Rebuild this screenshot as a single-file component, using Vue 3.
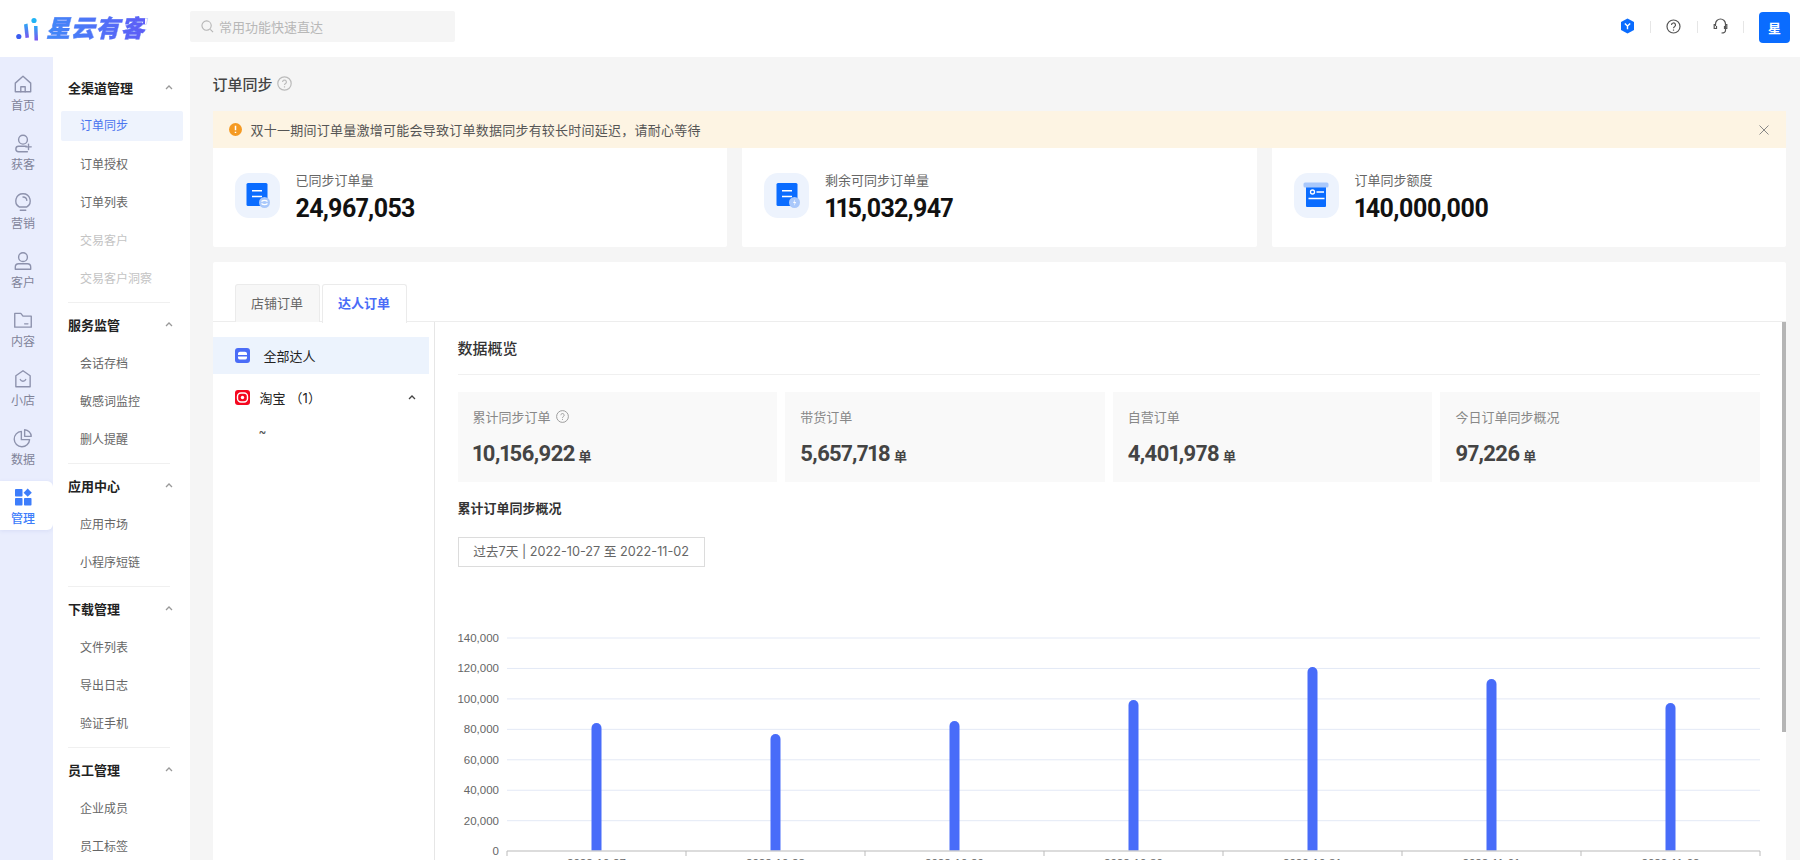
<script setup>
const rail = [
  { label: '首页', d: ['M3 9.2 10 3l7 6.2V17H3z', 'M8 17v-4.500h4V17'] },
  { label: '获客', d: ['M10 3a4 4 0 1 1 0 8 4 4 0 0 1 0-8z', 'M13 13H6a2.500 2.500 0 0 0 0 5h8', 'M15 11v5M12.500 13.500h5'] },
  { label: '营销', d: ['M10 2.500a6.500 6.500 0 0 1 3.500 12H6.500A6.500 6.500 0 0 1 10 2.500z', 'M7.500 17.500h5', 'M10 5.500a3.500 3.500 0 0 1 3.500 3'] },
  { label: '客户', d: ['M10 2.500a4 4 0 1 1 0 8 4 4 0 0 1 0-8z', 'M6 12.500h8a3 3 0 0 1 3 3v2H3v-2a3 3 0 0 1 3-3z'] },
  { label: '内容', d: ['M2.500 4h5.500l2 2.500h7.500V16.500h-15z', 'M11.500 13.500h3'] },
  { label: '小店', d: ['M10 2.500 16.500 7v10h-13V7z', 'M7.500 10.500c1 2 4 2 5 0'] },
  { label: '数据', d: ['M8.500 4a7 7 0 1 0 7.500 7.500H8.500z', 'M11.500 2.500a6.500 6.500 0 0 1 6 6h-6z'] }
]
const groups = [
  { title: '全渠道管理', items: [{ t: '订单同步', on: true }, { t: '订单授权' }, { t: '订单列表' }, { t: '交易客户', off: true }, { t: '交易客户洞察', off: true }] },
  { title: '服务监管', items: [{ t: '会话存档' }, { t: '敏感词监控' }, { t: '删人提醒' }] },
  { title: '应用中心', items: [{ t: '应用市场' }, { t: '小程序短链' }] },
  { title: '下载管理', items: [{ t: '文件列表' }, { t: '导出日志' }, { t: '验证手机' }] },
  { title: '员工管理', items: [{ t: '企业成员' }, { t: '员工标签' }] }
]
const stats = [
  { label: '已同步订单量', value: '24,967,053', kind: 'sync' },
  { label: '剩余可同步订单量', value: '115,032,947', kind: 'bolt' },
  { label: '订单同步额度', value: '140,000,000', kind: 'quota' }
]
const metrics = [
  { label: '累计同步订单', value: '10,156,922', help: true },
  { label: '带货订单', value: '5,657,718' },
  { label: '自营订单', value: '4,401,978' },
  { label: '今日订单同步概况', value: '97,226' }
]
const yLabels = ['140,000', '120,000', '100,000', '80,000', '60,000', '40,000', '20,000', '0']
const grid = yLabels.map((label, i) => ({ label, y: 18 + i * 30.45 }))
const plotLeft = 49
const step = 179
const axisY = 231
const bars = [
  { date: '2022-10-27', top: 103 },
  { date: '2022-10-28', top: 114 },
  { date: '2022-10-29', top: 101 },
  { date: '2022-10-30', top: 80 },
  { date: '2022-10-31', top: 47 },
  { date: '2022-11-01', top: 59 },
  { date: '2022-11-02', top: 83 }
].map((b, i) => {
  const cx = plotLeft + step * (i + 0.5)
  return { ...b, cx, path: `M${cx - 5} ${axisY}V${b.top + 5}a5 5 0 0 1 10 0V${axisY}z` }
})
const ticks = Array.from({ length: 8 }, (_, i) => plotLeft + step * i)
</script>

<template>
  <div class="app">
    <header class="top">
      <div class="logo">
        <svg class="mark" width="30" height="26" viewBox="0 0 30 26">
          <defs>
            <linearGradient id="lg" x1="0" y1="0" x2="0" y2="1">
              <stop offset="0" stop-color="#2ba8f5" />
              <stop offset="1" stop-color="#7a55f0" />
            </linearGradient>
          </defs>
          <circle cx="2.800" cy="20.500" r="2.600" fill="#3a5cf0" />
          <path d="M8 8.500l3.500-1 1.500 14-3.500.5z" fill="url(#lg)" />
          <path d="M18 10h3.500l.5 14.500h-3.500z" fill="url(#lg)" />
          <circle cx="18" cy="4.500" r="2.600" fill="#21b4f5" />
        </svg>
        <span class="logo-text">星云有客</span>
      </div>
      <div class="search">
        <svg width="13" height="13" viewBox="0 0 14 14" fill="none" stroke="#b5b5b5" stroke-width="1.200">
          <circle cx="6" cy="6" r="5" />
          <path d="M10 10l3 3" />
        </svg>
        <span>常用功能快速直达</span>
      </div>
      <div class="top-right">
        <svg class="tool" width="15" height="16" viewBox="0 0 15 16">
          <path d="M7.500.500 14 4v8l-6.500 3.500L1 12V4z" fill="#0a6cff" />
          <path d="M4.800 5.500 7.500 8l2.700-2.500M7.500 8v3.200" fill="none" stroke="#fff" stroke-width="1.400" />
        </svg>
        <i class="sep"></i>
        <svg class="tool" width="15" height="15" viewBox="0 0 15 15" fill="none" stroke="#555" stroke-width="1.200">
          <circle cx="7.500" cy="7.500" r="6.500" />
          <path d="M5.500 6a2 2 0 1 1 3 1.700c-.7.400-1 .8-1 1.500" />
          <path d="M7.500 10.500v1.200" />
        </svg>
        <i class="sep"></i>
        <svg class="tool" width="15" height="16" viewBox="0 0 15 16" fill="none" stroke="#555" stroke-width="1.200">
          <path d="M2.500 8V6a5 5 0 0 1 10 0v6.500c0 1.500-1.500 2.500-4 2.500" />
          <path d="M2.500 6.500H1.200v4h2.300V8M12.500 6.500h1.300v4h-2.300V8" />
        </svg>
        <i class="sep"></i>
        <div class="avatar">星</div>
      </div>
    </header>

    <div class="body">
      <nav class="rail">
        <div v-for="r in rail" :key="r.label" class="rail-item">
          <svg class="rail-icon" width="22" height="22" viewBox="0 0 20 20" fill="none" stroke="#8d92ad" stroke-width="1.250" stroke-linejoin="round" stroke-linecap="round">
            <path v-for="p in r.d" :key="p" :d="p" />
          </svg>
          <span>{{ r.label }}</span>
        </div>
        <div class="rail-item active">
          <svg width="20" height="20" viewBox="0 0 20 20" fill="#3d7dfb">
            <rect x="2" y="2" width="7.500" height="7.500" rx=".8" />
            <path d="M14.700 1.500 18.800 5.700l-4.100 4.100-4.100-4.100z" />
            <rect x="2" y="11" width="7.500" height="7.500" rx=".8" />
            <rect x="11" y="11" width="7.500" height="7.500" rx=".8" />
          </svg>
          <span>管理</span>
        </div>
      </nav>

      <aside class="sub">
        <section v-for="(g, i) in groups" :key="g.title" class="group" :class="{ divided: i > 0 }">
          <div class="group-title">
            <span>{{ g.title }}</span>
            <svg width="8" height="5" viewBox="0 0 8 5" fill="none" stroke="#999" stroke-width="1.300">
              <path d="M1 4l3-3 3 3" />
            </svg>
          </div>
          <div v-for="it in g.items" :key="it.t" class="sub-item" :class="{ on: it.on, off: it.off }">{{ it.t }}</div>
        </section>
      </aside>

      <main class="main">
        <div class="page-title">
          <span>订单同步</span>
          <svg width="15" height="15" viewBox="0 0 15 15" fill="none" stroke="#bbb" stroke-width="1.200">
            <circle cx="7.500" cy="7.500" r="6.700" />
            <path d="M5.600 6a1.900 1.900 0 1 1 2.900 1.600c-.6.400-1 .8-1 1.500M7.500 10.300v1.100" />
          </svg>
        </div>

        <div class="alert">
          <svg width="13" height="13" viewBox="0 0 13 13">
            <circle cx="6.500" cy="6.500" r="6.500" fill="#f59a23" />
            <path d="M6.500 2.800v4.400M6.500 8.700v1.400" stroke="#fff" stroke-width="1.500" />
          </svg>
          <span class="alert-text">双十一期间订单量激增可能会导致订单数据同步有较长时间延迟，请耐心等待</span>
          <svg class="close" width="10" height="10" viewBox="0 0 10 10" stroke="#888" stroke-width="1" fill="none">
            <path d="M.5.500l9 9M9.500.500l-9 9" />
          </svg>
        </div>

        <div class="stats">
          <div v-for="s in stats" :key="s.label" class="stat">
            <div class="tile">
              <svg width="26" height="26" viewBox="0 0 26 26">
                <template v-if="s.kind !== 'quota'">
                  <rect x="2.500" y="1" width="21" height="23" rx="1.500" fill="#0a6cff" />
                  <path d="M8 8.800h10M8 14.500h10" stroke="#fff" stroke-width="1.600" />
                  <circle cx="20.500" cy="20.500" r="5.500" fill="#a9c8fb" />
                  <path v-if="s.kind === 'sync'" d="M17.500 19.500c1.500-1.500 4.500-1.500 6 0M17.500 21.500c1.500 1.500 4.500 1.500 6 0" stroke="#fff" stroke-width="1.100" fill="none" />
                  <path v-else d="M21.200 17l-2.200 4h1.700l-.9 3 2.400-4h-1.700z" fill="#fff" />
                </template>
                <template v-else>
                  <rect x="3" y="3" width="20" height="22" rx="1" fill="#0a6cff" />
                  <rect x=".5" y=".5" width="25" height="5" rx="1.500" fill="#a9c8fb" />
                  <circle cx="9.500" cy="10" r="2" fill="none" stroke="#fff" stroke-width="1.300" />
                  <path d="M13.500 10H21M5.500 16.500h16" stroke="#fff" stroke-width="1.500" />
                </template>
              </svg>
            </div>
            <div class="stat-text">
              <div class="stat-label">{{ s.label }}</div>
              <div class="stat-value">{{ s.value }}</div>
            </div>
          </div>
        </div>

        <div class="panel">
          <div class="tabs">
            <div class="tab">店铺订单</div>
            <div class="tab active">达人订单</div>
          </div>
          <div class="panel-body">
            <div class="side">
              <div class="all-row">
                <svg width="15" height="15" viewBox="0 0 15 15">
                  <rect width="15" height="15" rx="3" fill="#4a6cf7" />
                  <path d="M3 5.500a2 2 0 0 1 2-1.800h5a2 2 0 0 1 2 1.800V7H3zM3 8.500h9v1.500a2 2 0 0 1-2 1.500H5a2 2 0 0 1-2-1.500z" fill="#fff" />
                </svg>
                <span>全部达人</span>
              </div>
              <div class="tb-row">
                <svg width="15" height="15" viewBox="0 0 15 15">
                  <rect width="15" height="15" rx="3" fill="#f5071f" />
                  <rect x="2.500" y="3" width="10" height="9" rx="3.500" fill="none" stroke="#fff" stroke-width="1.400" />
                  <circle cx="7.500" cy="7.500" r="1.700" fill="#fff" />
                </svg>
                <span class="tb-name">淘宝</span>
                <span class="tb-count">（1）</span>
                <svg class="tb-chev" width="8" height="5" viewBox="0 0 8 5" fill="none" stroke="#444" stroke-width="1.300">
                  <path d="M1 4l3-3 3 3" />
                </svg>
              </div>
              <div class="tilde">~</div>
            </div>

            <div class="content">
              <div class="scroll-thumb"></div>
              <div class="content-title">数据概览</div>
              <div class="metrics">
                <div v-for="m in metrics" :key="m.label" class="metric">
                  <div class="metric-label">
                    <span>{{ m.label }}</span>
                    <svg v-if="m.help" width="13" height="13" viewBox="0 0 15 15" fill="none" stroke="#999" stroke-width="1.100">
                      <circle cx="7.500" cy="7.500" r="6.800" />
                      <path d="M5.600 6a1.900 1.900 0 1 1 2.900 1.600c-.6.400-1 .8-1 1.500M7.500 10.300v1.100" />
                    </svg>
                  </div>
                  <div class="metric-value">{{ m.value }} <small>单</small></div>
                </div>
              </div>
              <div class="sec-title">累计订单同步概况</div>
              <div class="range">过去7天 | 2022-10-27 至 2022-11-02</div>
              <svg class="chart" width="1302" height="262" viewBox="0 0 1302 262">
                <g v-for="g in grid" :key="g.label">
                  <line v-if="g.label !== '0'" :x1="plotLeft" :x2="1302" :y1="g.y" :y2="g.y" stroke="#e3e9f6" />
                  <text x="41" :y="g.y + 4" text-anchor="end" class="axis-text">{{ g.label }}</text>
                </g>
                <path v-for="b in bars" :key="b.date" :d="b.path" fill="#486cf9" />
                <line :x1="plotLeft" :x2="1302" :y1="axisY" :y2="axisY" stroke="#d0d0d0" stroke-width="1.500" />
                <line v-for="t in ticks" :key="t" :x1="t" :x2="t" :y1="axisY" :y2="axisY + 5" stroke="#bbb" />
                <text v-for="b in bars" :key="'l' + b.date" :x="b.cx" y="247" text-anchor="middle" class="axis-text">{{ b.date }}</text>
              </svg>
            </div>
          </div>
        </div>
      </main>
    </div>
  </div>
</template>

<style>
html, body { margin: 0; padding: 0; background: #f5f5f5; overflow: hidden; }
</style>

<style scoped>
.app {
  width: 1800px;
  height: 860px;
  overflow: hidden;
  display: flex;
  flex-direction: column;
  font-family: Inter, "Noto Sans CJK SC", sans-serif;
  background: #f5f5f5;
}
.top {
  height: 57px;
  flex: none;
  background: #fff;
  display: flex;
  align-items: center;
  box-sizing: border-box;
}
.logo {
  width: 190px;
  flex: none;
  padding-left: 16px;
  box-sizing: border-box;
  display: flex;
  align-items: center;
}
.mark { flex: none; }
.logo-text {
  font-size: 24px;
  line-height: 30px;
  font-weight: 900;
  font-style: italic;
  letter-spacing: .8px;
  background: linear-gradient(90deg, #3f8af8, #5f5cf6);
  -webkit-background-clip: text;
  background-clip: text;
  color: transparent;
  -webkit-text-stroke: .25px #4f72f7;
}
.search {
  width: 265px;
  height: 31px;
  margin-top: -4px;
  background: #f5f5f5;
  border-radius: 2px;
  display: flex;
  align-items: center;
  gap: 5px;
  padding-left: 11px;
  box-sizing: border-box;
  font-size: 13px;
  color: #b8b8b8;
}
.top-right {
  margin-left: auto;
  padding-right: 10px;
  display: flex;
  align-items: center;
  margin-top: -3px;
}
.tool { margin-top: -2px; }
.sep {
  width: 1px;
  height: 12px;
  background: #e6e6e6;
  margin: 0 15px 0 15.500px;
}
.avatar {
  width: 31px;
  height: 31px;
  background: #0a6cff;
  border-radius: 4px;
  color: #fff;
  font-size: 13px;
  font-weight: 700;
  display: flex;
  align-items: center;
  justify-content: center;
}
.body { flex: 1; display: flex; min-height: 0; }
.rail {
  width: 53px;
  flex: none;
  background: #e9edfd;
  padding-top: 11px;
  box-sizing: border-box;
}
.rail-item {
  height: 49px;
  margin-bottom: 10px;
  padding: 6px 7px 0 0;
  box-sizing: border-box;
  display: flex;
  flex-direction: column;
  align-items: center;
  font-size: 12px;
  color: #7f8399;
}
.rail-icon { margin: -1px 0; }
.rail-item span { display: block; line-height: 17px; margin-top: 3px; }
.rail-item.active {
  background: #fff;
  color: #3d7dfb;
  border-radius: 0 6px 6px 0;
  box-shadow: 0 1px 4px rgba(90, 110, 200, .12);
  font-weight: 500;
}
.sub {
  width: 137px;
  flex: none;
  background: #fff;
  padding: 16px 7px 0 8px;
  box-sizing: border-box;
  overflow: hidden;
}
.group.divided::before {
  content: "";
  display: block;
  height: 1px;
  margin: 9px 13px 7px 7px;
  background: #f0f0f0;
}
.group-title {
  height: 28px;
  margin-bottom: 10px;
  padding: 0 10px 0 7px;
  display: flex;
  align-items: center;
  justify-content: space-between;
  font-size: 13px;
  font-weight: 600;
  color: #222;
}
.sub-item {
  height: 30px;
  line-height: 32px;
  margin-bottom: 8px;
  padding-left: 19px;
  font-size: 12px;
  color: #666;
  border-radius: 2px;
}
.sub-item.on { line-height: 30px; background: #eef3fd; color: #4a74ef; }
.sub-item.off { color: #c4c4c4; }
.main {
  flex: 1;
  min-width: 0;
  padding: 0 14px 0 22.600px;
  box-sizing: border-box;
}
.page-title {
  height: 54px;
  padding-bottom: 2px;
  box-sizing: border-box;
  display: flex;
  align-items: center;
  gap: 4px;
  font-size: 15px;
  font-weight: 500;
  color: #444;
}
.alert {
  height: 37px;
  background: #fdf4e3;
  display: flex;
  align-items: center;
  padding: 0 17px 0 16px;
  font-size: 13px;
  color: #555;
}
.alert-text { margin-left: 9px; letter-spacing: .24px; }
.close { margin-left: auto; }
.stats {
  display: grid;
  grid-template-columns: repeat(3, 1fr);
  gap: 15px;
}
.stat {
  height: 99px;
  background: #fff;
  border-radius: 0 0 2px 2px;
  padding-left: 22px;
  display: flex;
  align-items: center;
  box-sizing: border-box;
}
.tile {
  width: 45px;
  height: 45px;
  flex: none;
  margin-top: -5px;
  border-radius: 14px;
  background: #edf3fd;
  display: flex;
  align-items: center;
  justify-content: center;
}
.stat-text { margin-left: 16px; margin-top: -2px; }
.stat-label { font-size: 13px; line-height: 18px; color: #666; }
.stat-value {
  margin-top: 6px;
  font-family: Roboto, sans-serif;
  font-size: 25px;
  line-height: 28px;
  font-weight: 700;
  letter-spacing: -.8px;
  font-variant-numeric: proportional-nums;
  color: #111;
}
.panel {
  margin-top: 15px;
  background: #fff;
  height: 620px;
  border-radius: 2px 2px 0 0;
}
.tabs {
  height: 60px;
  padding: 22px 0 0 22px;
  box-sizing: border-box;
  display: flex;
  gap: 2px;
  border-bottom: 1px solid #ededed;
}
.tab {
  width: 85px;
  height: 38px;
  box-sizing: border-box;
  border: 1px solid #ebebeb;
  border-bottom: none;
  border-radius: 3px 3px 0 0;
  background: #f7f7f7;
  text-align: center;
  line-height: 37px;
  font-size: 13px;
  color: #666;
}
.tab.active {
  height: 39px;
  background: #fff;
  color: #4a6cf7;
  font-weight: 700;
}
.panel-body { display: flex; height: 560px; }
.side {
  width: 222px;
  flex: none;
  box-sizing: border-box;
  padding: 15px 5px 0 0;
  border-right: 1px solid #e6e6e6;
  font-size: 13px;
  color: #222;
}
.all-row {
  height: 37px;
  background: #ecf3fd;
  display: flex;
  align-items: center;
  padding-left: 22px;
  gap: 14px;
  box-sizing: border-box;
}
.tb-row {
  height: 46px;
  display: flex;
  align-items: center;
  padding: 0 13px 0 22px;
}
.tb-name { margin-left: 10px; }
.tb-count { margin-left: 4px; }
.tb-chev { margin-left: auto; }
.tilde { padding: 2px 0 0 46px; font-size: 12px; line-height: 20px; color: #555; }
.content {
  flex: 1;
  min-width: 0;
  position: relative;
  padding: 0 26px 0 23px;
  box-sizing: border-box;
}
.scroll-thumb {
  position: absolute;
  top: 0;
  right: 0;
  width: 4px;
  height: 410px;
  background: #b5b5b5;
}
.content-title {
  height: 53px;
  line-height: 53px;
  font-size: 15px;
  font-weight: 500;
  color: #333;
  border-bottom: 1px solid #f0f0f0;
  box-sizing: border-box;
}
.metrics {
  margin-top: 17px;
  display: grid;
  grid-template-columns: repeat(4, 1fr);
  gap: 8px;
}
.metric {
  height: 90px;
  background: #f9f9f9;
  padding: 14px 15px 0;
  box-sizing: border-box;
}
.metric-label {
  display: flex;
  align-items: center;
  gap: 5px;
  height: 20px;
  font-size: 13px;
  color: #888;
}
.metric-value {
  margin-top: 14px;
  font-family: Roboto, sans-serif;
  font-size: 22px;
  line-height: 28px;
  font-weight: 700;
  color: #444;
  letter-spacing: -.65px;
  font-variant-numeric: proportional-nums;
}
.metric-value small {
  margin-left: -1px;
  font-family: "Noto Sans CJK SC", sans-serif;
  font-size: 13px;
  font-weight: 700;
  letter-spacing: 0;
}
.sec-title {
  margin-top: 16px;
  height: 20px;
  line-height: 20px;
  font-size: 13px;
  font-weight: 600;
  color: #333;
}
.range {
  margin-top: 19px;
  width: 247px;
  height: 30px;
  line-height: 28px;
  box-sizing: border-box;
  border: 1px solid #dcdcdc;
  text-align: center;
  font-size: 12.700px;
  color: #666;
  white-space: nowrap;
}
.chart { display: block; margin-top: 53px; overflow: visible; }
.axis-text {
  font-family: "Liberation Sans", sans-serif;
  font-size: 11.500px;
  fill: #666;
}
</style>
